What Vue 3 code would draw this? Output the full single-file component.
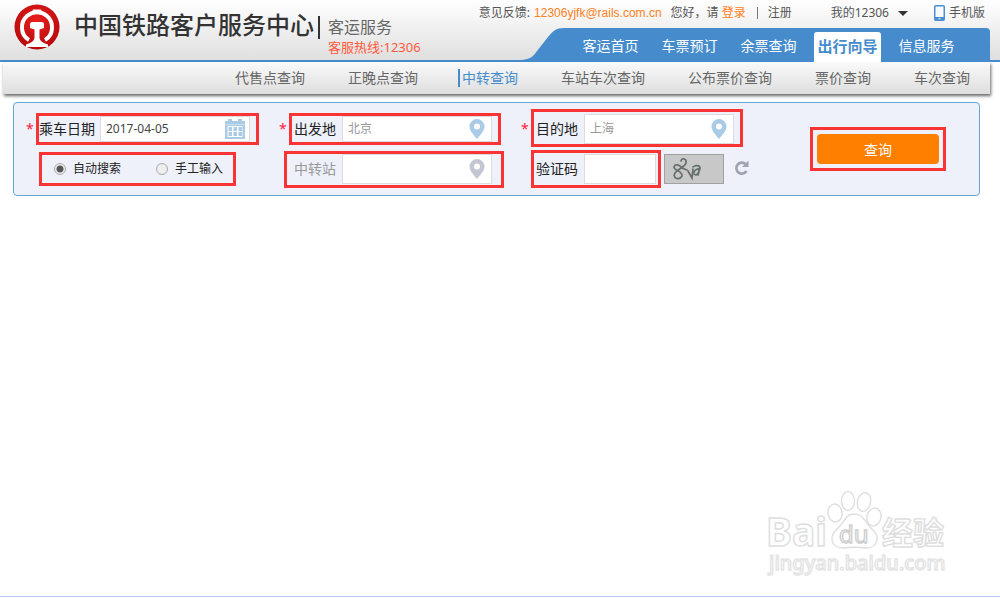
<template>
  <div class="page">
    <header class="header">
      <div class="brand">
        <svg class="logo" viewBox="0 0 46 46" aria-hidden="true">
          <defs>
            <radialGradient id="logoRed" cx="50%" cy="35%" r="65%">
              <stop offset="0" stop-color="#e8201c" />
              <stop offset="1" stop-color="#b5080c" />
            </radialGradient>
          </defs>
          <circle cx="23" cy="23" r="22.5" fill="url(#logoRed)" />
          <path d="M15 36 C6 31 6 18 13 12 C19 7 27 7 33 12 C40 18 40 31 31 36" fill="none" stroke="#fff" stroke-width="4" />
          <path d="M17.500 9 L19 5.500 H27 L28.500 9Z" fill="#fff" />
          <path d="M16 20 Q16 18 18.500 18 H27.500 Q30 18 30 20 V24 L25.500 25.500 V34 Q26 38 34 40.500 V43 H12 V40.500 Q20 38 20.500 34 V25.500 L16 24Z" fill="#fff" />
        </svg>
        <h1 class="title">中国铁路客户服务中心</h1>
        <div class="service">
          <span class="service-name">客运服务</span>
          <span class="hotline">客服热线:12306</span>
        </div>
      </div>

      <div class="header-right">
        <div class="top-links">
          <span>意见反馈:</span>
          <a class="orange mail" href="#">12306yjfk@rails.com.cn</a>
          <span class="hello">您好，请</span>
          <a class="orange login" href="#">登录</a>
          <span class="divider"></span>
          <a href="#">注册</a>
          <button class="my" type="button">我的12306<i class="caret"></i></button>
          <a class="phone" href="#">
            <svg viewBox="0 0 11 16" width="11" height="16" aria-hidden="true">
              <rect x="0.750" y="0.750" width="9.500" height="14.500" rx="1" fill="#f6fafd" stroke="#4a90d0" stroke-width="1.500" />
              <path d="M1 13.500 H10" stroke="#4a90d0" stroke-width="3" />
              <path d="M4.500 13.800 H6.500" stroke="#fff" />
            </svg>
            手机版
          </a>
        </div>
        <div class="nav-wrap">
          <svg class="nav-curve" viewBox="0 0 42 34" width="42" height="34" aria-hidden="true">
            <path d="M0 32 C8 31 11 29 15 23 L26 9 C31 3 34 0 42 0 V34 H0Z" fill="#468ccd" />
          </svg>
          <nav class="nav">
            <a
              v-for="item in navs"
              :key="item"
              href="#"
              :class="{ active: item === activeNav }"
              @click.prevent="activeNav = item"
            ><span>{{ item }}</span></a>
          </nav>
        </div>
      </div>
    </header>

    <nav class="sub-nav">
      <a
        v-for="item in subNavs"
        :key="item"
        href="#"
        :class="{ active: item === activeSub }"
        @click.prevent="activeSub = item"
      >{{ item }}</a>
    </nav>

    <form class="search" @submit.prevent>
      <div class="cell first">
        <span class="star">*</span>
        <div class="frame date-frame">
          <label class="wide" for="date">乘车日期</label>
          <div class="field">
            <input id="date" v-model="date" class="dark" type="text">
            <svg class="icon" viewBox="0 0 20 20" width="20" height="20" aria-hidden="true">
              <path d="M0 2 H3 V0 H7 V2 H13 V0 H17 V2 H20 V20 H0Z" fill="#a9cbe6" />
              <path d="M0 5.500 H20" stroke="#c9dff0" />
              <rect x="2.500" y="7" width="15" height="11" fill="#fff" />
              <g fill="#a9cbe6">
                <template v-for="r in 2" :key="r">
                  <rect v-for="c in 3" :key="c" :x="c * 5 - 1.5" :y="r * 5 + 3" width="3.500" height="4" />
                </template>
              </g>
            </svg>
          </div>
        </div>
      </div>

      <div class="cell">
        <span class="star">*</span>
        <div class="frame">
          <label for="from">出发地</label>
          <div class="field">
            <input id="from" v-model="from" type="text">
            <svg class="icon pin" viewBox="0 0 16 20" width="16" height="20" aria-hidden="true">
              <path :d="pin" fill="#a9cbe6" fill-rule="evenodd" />
            </svg>
          </div>
        </div>
      </div>

      <div class="cell top">
        <span class="star">*</span>
        <div class="frame tall">
          <label for="to">目的地</label>
          <div class="field">
            <input id="to" v-model="to" type="text">
            <svg class="icon pin" viewBox="0 0 16 20" width="16" height="20" aria-hidden="true">
              <path :d="pin" fill="#a9cbe6" fill-rule="evenodd" />
            </svg>
          </div>
        </div>
      </div>

      <div class="submit-cell">
        <div class="submit-frame">
          <button class="submit" type="submit">查询</button>
        </div>
      </div>

      <div class="cell mode-cell">
        <div class="frame modes">
          <label><input v-model="mode" type="radio" name="mode" value="auto">自动搜索</label>
          <label><input v-model="mode" type="radio" name="mode" value="manual">手工输入</label>
        </div>
      </div>

      <div class="cell transfer-cell">
        <div class="frame transfer">
          <label for="transfer">中转站</label>
          <div class="field">
            <input id="transfer" v-model="transfer" type="text">
            <svg class="icon pin" viewBox="0 0 16 20" width="16" height="20" aria-hidden="true">
              <path :d="pin" fill="#c3c7d3" fill-rule="evenodd" />
            </svg>
          </div>
        </div>
      </div>

      <div class="cell captcha-cell">
        <div class="frame tall captcha">
          <label for="code">验证码</label>
          <div class="field">
            <input id="code" v-model="code" type="text">
          </div>
        </div>
        <svg class="captcha-img" viewBox="0 0 60 30" width="60" height="30" role="img">
          <rect x="0.500" y="0.500" width="59" height="29" fill="#c8c8c8" stroke="#a0a0a0" />
          <g fill="none" stroke="#66706b" stroke-width="1.700" stroke-linecap="round">
            <path d="M17 7 C18 3 23 5 22 9 C21 13 14 15 11 19 C8 24 15 27 18 22 C19 17 10 17 10 13 C11 9 16 11 18 14 L23 16" />
            <path d="M24 17 L28 24 L29 15" />
            <path d="M29 13 C31 11 36 11 36 14 L34 21 M36 15 C32 14 29 18 30 20 C32 22 35 20 35 16" />
          </g>
        </svg>
        <button class="refresh" type="button" aria-label="刷新">
          <svg viewBox="0 0 16 16" width="16" height="16" aria-hidden="true">
            <path d="M12.500 11 A5.500 5.500 0 1 1 11.500 4" fill="none" stroke="#9fa3ae" stroke-width="2.600" />
            <path d="M14.500 0.500 V7 H8Z" fill="#9fa3ae" />
          </svg>
        </button>
      </div>
    </form>

    <svg class="watermark" viewBox="0 0 182 90" width="182" height="90" aria-hidden="true">
      <g fill="#fff" stroke="#dedede" stroke-width="1.400">
        <text x="0" y="56" class="wm-bai">Bai</text>
        <ellipse cx="69" cy="23" rx="7" ry="9" transform="rotate(-8 69 23)" />
        <ellipse cx="82" cy="11" rx="6.500" ry="9.500" />
        <ellipse cx="98" cy="12" rx="6.500" ry="9.500" transform="rotate(12 98 12)" />
        <ellipse cx="108" cy="27" rx="7" ry="9" transform="rotate(14 108 27)" />
        <path d="M88 24 C97 24 99 32 104 37 C109 42 112 45 111 50 C110 56 106 58 100 58 C95 57 82 57 77 58 C71 58 67 56 66 50 C65 45 69 41 73 37 C79 31 80 24 88 24Z" />
        <text x="73" y="53" class="wm-du">du</text>
        <text x="116" y="54" class="wm-cn">经验</text>
        <text x="3" y="80" class="wm-url">jingyan.baidu.com</text>
      </g>
    </svg>
  </div>
</template>

<script setup>
import { ref } from 'vue'

const navs = ['客运首页', '车票预订', '余票查询', '出行向导', '信息服务']
const subNavs = ['代售点查询', '正晚点查询', '中转查询', '车站车次查询', '公布票价查询', '票价查询', '车次查询']

const activeNav = ref('出行向导')
const activeSub = ref('中转查询')

const date = ref('2017-04-05')
const from = ref('北京')
const to = ref('上海')
const transfer = ref('')
const code = ref('')
const mode = ref('auto')

const pin = 'M8 0 A7.500 7.500 0 0 1 15.500 7.500 C15.500 12 11 16 8 20 C5 16 0.500 12 0.500 7.500 A7.500 7.500 0 0 1 8 0Z M8 4.500 A3 3 0 1 0 8 10.500 A3 3 0 1 0 8 4.500Z'
</script>

<style>
body {
  background: #fff;
}
</style>

<style scoped>
.page {
  position: relative;
  box-sizing: border-box;
  min-height: calc(100vh - 1px);
  border-bottom: 1px solid #b4c8ee;
  font-family: "Noto Sans", "Noto Sans CJK SC", sans-serif;
  font-size: 14px;
  color: #666;
}

.page * {
  box-sizing: border-box;
}

a {
  color: inherit;
  text-decoration: none;
}

button,
input {
  margin: 0;
  padding: 0;
  border: 0;
  background: none;
  font: inherit;
  color: inherit;
}

.header {
  display: flex;
  justify-content: space-between;
  height: 62px;
  border-bottom: 2px solid #468ccd;
  background: linear-gradient(#fff, #dfdfdf);
}

.brand {
  display: flex;
  align-items: center;
  padding: 0 0 6px 14px;
  white-space: nowrap;
}

.logo {
  width: 46px;
  height: 46px;
}

.title {
  margin: 0 0 0 14px;
  padding-bottom: 4px;
  font-size: 24px;
  line-height: 24px;
  font-weight: 500;
  color: #333;
}

.service {
  position: relative;
  display: flex;
  flex-direction: column;
  margin-left: 4px;
  padding: 20px 0 0 10px;
}

.service::before {
  content: "";
  position: absolute;
  left: 0;
  top: 19px;
  width: 2px;
  height: 23px;
  background: #333;
}

.service-name {
  font-size: 16px;
  line-height: 20px;
}

.hotline {
  font-size: 13px;
  line-height: 20px;
  color: #ff5a3c;
}

.header-right {
  display: flex;
  flex-direction: column;
  align-items: flex-end;
}

.top-links {
  display: flex;
  flex: none;
  align-items: center;
  height: 28px;
  padding: 0 15px 2px 0;
  font-size: 12px;
  line-height: 18px;
  white-space: nowrap;
  color: #555;
}

.orange {
  color: #ff8020;
}

.mail {
  margin-left: 4px;
  font-family: "Liberation Sans", sans-serif;
}

.hello {
  margin-left: 9px;
}

.login {
  margin-left: 3px;
}

.divider {
  width: 1px;
  height: 12px;
  margin: 0 10px 0 11px;
  background: #777;
}

.my {
  display: flex;
  align-items: center;
  margin-left: 39px;
}

.caret {
  margin-left: 9px;
  border: 5px solid transparent;
  border-top-color: #333;
  border-bottom: 0;
}

.phone {
  display: flex;
  align-items: center;
  gap: 4px;
  margin-left: 26px;
}

.nav-wrap {
  display: flex;
  flex: none;
  margin-right: 10px;
}

.nav-curve {
  display: block;
}

.nav {
  display: flex;
  height: 34px;
  padding: 0 24px 0 7px;
  border-top-right-radius: 4px;
  background: #468ccd;
  color: #fff;
}

.nav a {
  display: flex;
  align-items: flex-end;
  justify-content: center;
  width: 79px;
}

.nav span {
  height: 30px;
  line-height: 28px;
}

.nav .active span {
  padding: 0 3px;
  border-radius: 3px 3px 0 0;
  background: #fff;
  font-size: 15px;
  font-weight: 700;
  color: #468ccd;
}

.sub-nav {
  display: flex;
  align-items: center;
  justify-content: flex-end;
  gap: 43px;
  height: 32px;
  margin: 0 10px 0 3px;
  padding-right: 20px;
  background: linear-gradient(#fafafa, #dedede);
  box-shadow: 1px 2px 3px #666;
  white-space: nowrap;
}

.sub-nav a {
  line-height: 18px;
}

.sub-nav .active {
  margin-left: -3px;
  padding-left: 2px;
  border-left: 2px solid #468ccd;
  color: #468ccd;
}

.search {
  display: grid;
  grid-template-columns: 265px 242px 256px 1fr;
  grid-template-rows: 40px 40px;
  margin: 8px 20px 0 13px;
  padding: 6px 0;
  border: 1px solid #5fa8d8;
  border-radius: 4px;
  background: #eef1fa;
}

.cell {
  display: flex;
  align-items: center;
  color: #222;
}

.first {
  padding-left: 12px;
}

.star {
  width: 10px;
  line-height: 20px;
  color: #ff2040;
}

.frame {
  display: flex;
  align-items: center;
  height: 32px;
  padding-left: 2px;
  border: 3px solid #fa3434;
  width: 212px;
}

.frame label {
  flex: none;
  width: 48px;
  line-height: 20px;
  white-space: nowrap;
}

.date-frame {
  width: 223px;
  padding-left: 0;
}

.frame .wide {
  width: 61px;
}

.tall {
  height: 38px;
}

.top {
  align-items: flex-start;
}

.top .star {
  margin-top: 10px;
}

.top .frame {
  padding-top: 2px;
}

.field {
  display: flex;
  align-items: center;
  width: 150px;
  height: 100%;
  max-height: 30px;
  padding: 0 6px 0 5px;
  border: 1px solid #dcdcdc;
  background: #fff;
}

.field input {
  flex: 1;
  min-width: 0;
  font-size: 12px;
  line-height: 18px;
  color: #999;
  outline: none;
}

.field .dark {
  color: #444;
}

.icon {
  flex: none;
}

.date-frame .field {
  padding-right: 4px;
}

.mode-cell {
  padding-left: 25px;
}

.modes {
  width: 197px;
  height: 34px;
  padding: 0 10px 0 12px;
  justify-content: space-between;
  font-size: 12px;
}

.modes label {
  display: flex;
  align-items: center;
  gap: 7px;
  width: auto;
}

.modes input {
  width: 12px;
  height: 12px;
  border: 1px solid #aaa;
  border-radius: 50%;
  background: #eee;
  appearance: none;
}

.modes input:checked {
  background: radial-gradient(circle, #555 0 3px, #eee 4px);
}

.transfer-cell {
  padding-left: 5px;
}

.transfer {
  width: 220px;
  height: 37px;
  padding-left: 7px;
}

.transfer label {
  color: #999;
}

.captcha-cell {
  padding-left: 10px;
}

.captcha {
  width: 130px;
}

.captcha .field {
  width: 72px;
}

.captcha-img {
  flex: none;
  margin-left: 3px;
}

.refresh {
  display: flex;
  margin: 0 0 3px 10px;
  cursor: pointer;
}

.submit-cell {
  grid-row: 1 / 3;
  grid-column: 4;
  display: flex;
  align-items: center;
  justify-content: center;
}

.submit-frame {
  padding: 4px;
  border: 3px solid #fa3434;
}

.submit {
  display: block;
  width: 122px;
  height: 30px;
  border-radius: 4px;
  background: #ff8000;
  color: #fff;
  cursor: pointer;
}

.watermark {
  position: absolute;
  right: 52px;
  bottom: 16px;
}

.watermark text {
  font-family: "Noto Sans", "Noto Sans CJK SC", sans-serif;
  font-weight: 700;
}

.wm-bai {
  font-size: 39px;
}

.watermark .wm-du {
  font-size: 24px;
  font-weight: 400;
  stroke: #cfcfcf;
}

.wm-cn {
  font-size: 31px;
}

.watermark .wm-url {
  font-size: 20px;
  font-weight: 500;
  stroke: #e4e4e4;
}
</style>
